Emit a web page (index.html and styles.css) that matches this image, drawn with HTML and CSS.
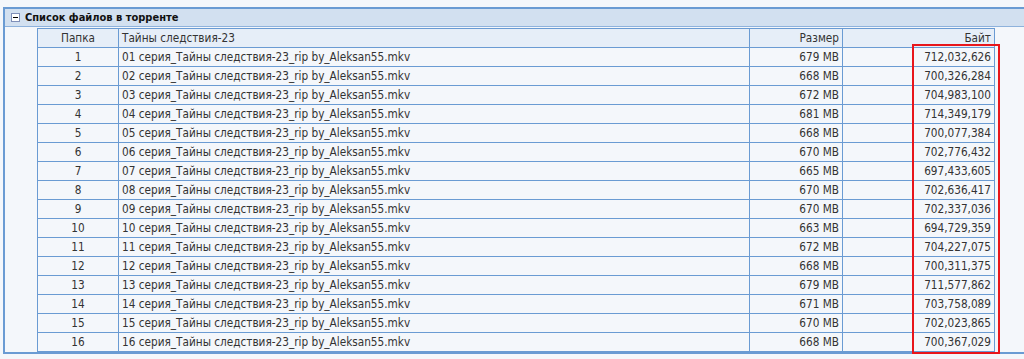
FILE: index.html
```html
<!DOCTYPE html>
<html lang="ru">
<head>
<meta charset="utf-8">
<title>Список файлов в торренте</title>
<link rel="stylesheet" href="styles.css">
</head>
<body>
<div class="panel">
  <div class="panel-head">
    <span class="toggle"><svg width="9" height="9" viewBox="0 0 9 9"><rect x="0.5" y="0.5" width="8" height="8" fill="#fff" stroke="#7f8fb8"/><rect x="2" y="4" width="5" height="1" fill="#000"/></svg></span>
    <span class="title">Список файлов в торренте</span>
  </div>
  <div class="panel-body">
    <div class="table-wrap">
      <table class="files">
        <thead>
          <tr><th class="c-num">Папка</th><th class="c-name">Тайны следствия-23</th><th class="c-size">Размер</th><th class="c-bytes">Байт</th></tr>
        </thead>
        <tbody>
          <tr><td class="c-num">1</td><td class="c-name">01 серия_Тайны следствия-23_rip by_Aleksan55.mkv</td><td class="c-size">679 MB</td><td class="c-bytes">712,032,626</td></tr>
          <tr><td class="c-num">2</td><td class="c-name">02 серия_Тайны следствия-23_rip by_Aleksan55.mkv</td><td class="c-size">668 MB</td><td class="c-bytes">700,326,284</td></tr>
          <tr><td class="c-num">3</td><td class="c-name">03 серия_Тайны следствия-23_rip by_Aleksan55.mkv</td><td class="c-size">672 MB</td><td class="c-bytes">704,983,100</td></tr>
          <tr><td class="c-num">4</td><td class="c-name">04 серия_Тайны следствия-23_rip by_Aleksan55.mkv</td><td class="c-size">681 MB</td><td class="c-bytes">714,349,179</td></tr>
          <tr><td class="c-num">5</td><td class="c-name">05 серия_Тайны следствия-23_rip by_Aleksan55.mkv</td><td class="c-size">668 MB</td><td class="c-bytes">700,077,384</td></tr>
          <tr><td class="c-num">6</td><td class="c-name">06 серия_Тайны следствия-23_rip by_Aleksan55.mkv</td><td class="c-size">670 MB</td><td class="c-bytes">702,776,432</td></tr>
          <tr><td class="c-num">7</td><td class="c-name">07 серия_Тайны следствия-23_rip by_Aleksan55.mkv</td><td class="c-size">665 MB</td><td class="c-bytes">697,433,605</td></tr>
          <tr><td class="c-num">8</td><td class="c-name">08 серия_Тайны следствия-23_rip by_Aleksan55.mkv</td><td class="c-size">670 MB</td><td class="c-bytes">702,636,417</td></tr>
          <tr><td class="c-num">9</td><td class="c-name">09 серия_Тайны следствия-23_rip by_Aleksan55.mkv</td><td class="c-size">670 MB</td><td class="c-bytes">702,337,036</td></tr>
          <tr><td class="c-num">10</td><td class="c-name">10 серия_Тайны следствия-23_rip by_Aleksan55.mkv</td><td class="c-size">663 MB</td><td class="c-bytes">694,729,359</td></tr>
          <tr><td class="c-num">11</td><td class="c-name">11 серия_Тайны следствия-23_rip by_Aleksan55.mkv</td><td class="c-size">672 MB</td><td class="c-bytes">704,227,075</td></tr>
          <tr><td class="c-num">12</td><td class="c-name">12 серия_Тайны следствия-23_rip by_Aleksan55.mkv</td><td class="c-size">668 MB</td><td class="c-bytes">700,311,375</td></tr>
          <tr><td class="c-num">13</td><td class="c-name">13 серия_Тайны следствия-23_rip by_Aleksan55.mkv</td><td class="c-size">679 MB</td><td class="c-bytes">711,577,862</td></tr>
          <tr><td class="c-num">14</td><td class="c-name">14 серия_Тайны следствия-23_rip by_Aleksan55.mkv</td><td class="c-size">671 MB</td><td class="c-bytes">703,758,089</td></tr>
          <tr><td class="c-num">15</td><td class="c-name">15 серия_Тайны следствия-23_rip by_Aleksan55.mkv</td><td class="c-size">670 MB</td><td class="c-bytes">702,023,865</td></tr>
          <tr><td class="c-num">16</td><td class="c-name">16 серия_Тайны следствия-23_rip by_Aleksan55.mkv</td><td class="c-size">668 MB</td><td class="c-bytes">700,367,029</td></tr>
        </tbody>
      </table>
      <div class="highlight"></div>
    </div>
  </div>
</div>
</body>
</html>
```
FILE: styles.css
```css
html, body {
  margin: 0;
  padding: 0;
  background: #f4f7fb;
}
body {
  padding: 7px 0 0 3px;
  font-family: "DejaVu Sans Condensed", "DejaVu Sans", sans-serif;
  font-size: 11.7px;
  color: #333;
}
.panel {
  border: 2px solid #6a9bd3;
  border-right: none;
  background: #f4f7fb;
  width: 1040px;
}
.panel-head {
  display: flex;
  align-items: center;
  gap: 5px;
  height: 17px;
  padding-left: 6px;
  background: #d2e0f0;
  border-bottom: 1px solid #8eb2dc;
}
.toggle {
  display: flex;
}
.title {
  font-weight: bold;
  font-size: 11px;
  color: #111;
}
.panel-body {
  padding: 1px 0 0 32px;
}
.table-wrap {
  position: relative;
  width: 958px;
}
.files {
  border-collapse: collapse;
  width: 958px;
  table-layout: fixed;
}
.files th, .files td {
  border: 1px solid #6a9bd3;
  height: 18px;
  padding: 0 3px;
  font-weight: normal;
  white-space: nowrap;
  overflow: hidden;
  line-height: 18px;
}
.files th {
  background: #e6eef8;
}
.files td {
  background: #f4f7fb;
}
.c-num { width: 74px; text-align: center; }
.c-name { text-align: left; }
.c-size { width: 86px; text-align: right; }
.c-bytes { width: 145px; text-align: right; }
.highlight {
  position: absolute;
  left: 875px;
  top: 16px;
  width: 84px;
  height: 306px;
  border: 2px solid #e8161b;
}
```
